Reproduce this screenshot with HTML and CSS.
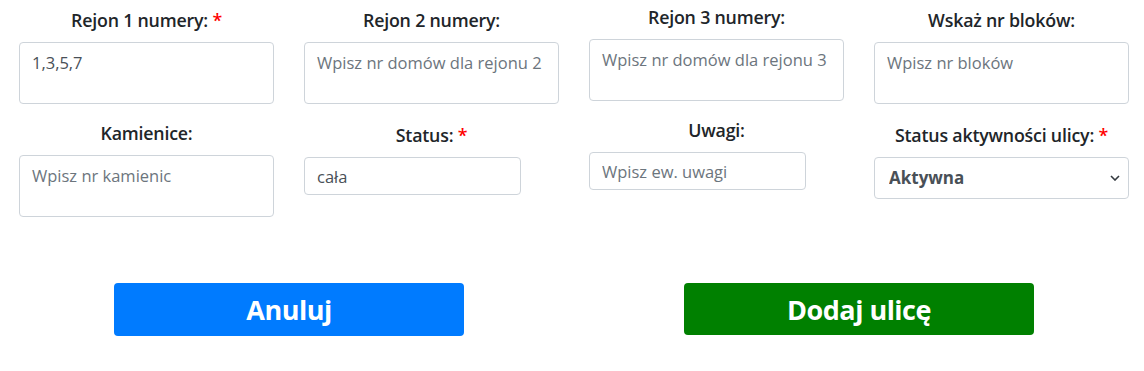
FILE: index.html
```html
<!DOCTYPE html>
<html>
<head>
    <meta charset="utf-8">
    <title>Dodaj ulicę</title>
    <link rel="stylesheet" href="styles.css">
</head>
<body>
    <form class="street-form">
        <div class="row row-top">
            <div class="field">
                <label for="r1">Rejon 1 numery: <span class="req">*</span></label>
                <textarea id="r1" class="control area">1,3,5,7</textarea>
            </div>
            <div class="field">
                <label for="r2">Rejon 2 numery:</label>
                <textarea id="r2" class="control area" placeholder="Wpisz nr domów dla rejonu 2"></textarea>
            </div>
            <div class="field shift-up">
                <label for="r3">Rejon 3 numery:</label>
                <textarea id="r3" class="control area" placeholder="Wpisz nr domów dla rejonu 3"></textarea>
            </div>
            <div class="field">
                <label for="bloki">Wskaż nr bloków:</label>
                <textarea id="bloki" class="control area" placeholder="Wpisz nr bloków"></textarea>
            </div>
        </div>

        <div class="row row-bottom">
            <div class="field">
                <label for="kam">Kamienice:</label>
                <textarea id="kam" class="control area" placeholder="Wpisz nr kamienic"></textarea>
            </div>
            <div class="field shift-down">
                <label for="status">Status: <span class="req">*</span></label>
                <input type="text" id="status" class="control short" value="cała">
            </div>
            <div class="field shift-up">
                <label for="uwagi">Uwagi:</label>
                <input type="text" id="uwagi" class="control short" placeholder="Wpisz ew. uwagi">
            </div>
            <div class="field shift-down">
                <label for="aktywna">Status aktywności ulicy: <span class="req">*</span></label>
                <select id="aktywna" class="control select">
                    <option>Aktywna</option>
                    <option>Nieaktywna</option>
                </select>
            </div>
        </div>

        <div class="buttons">
            <div class="btn-cell">
                <button type="button" class="btn btn-cancel">Anuluj</button>
            </div>
            <div class="btn-cell">
                <button type="submit" class="btn btn-add">Dodaj ulicę</button>
            </div>
        </div>
    </form>
</body>
</html>
```

FILE: styles.css
```css
body {
    font-family: "Open Sans", "Noto Sans", sans-serif;
    background-color: #fff;
    color: #212529;
    margin: 0;
    padding: 0;
}

.street-form {
    padding-left: 4px;
}

.row {
    display: grid;
    grid-template-columns: repeat(4, 285px);
    align-items: start;
}

.row-top {
    padding-top: 8px;
}

.row-bottom {
    padding-top: 17px;
}

.field {
    padding: 0 15px;
    text-align: center;
}

.shift-up {
    margin-top: -3px;
}

.shift-down {
    margin-top: 2px;
}

.field label {
    display: block;
    font-size: 17.8px;
    font-weight: 600;
    line-height: 24px;
    margin-bottom: 10px;
    letter-spacing: -0.2px;
}

.req {
    color: red;
}

.control {
    display: block;
    width: 100%;
    box-sizing: border-box;
    border: 1px solid #ced4da;
    border-radius: 4px;
    background-color: #fff;
    font-family: inherit;
    font-size: 16.5px;
    color: #495057;
    text-align: left;
    padding: 9px 12px 7px;
    line-height: 22px;
}

.control::placeholder {
    color: #6c757d;
}

.area {
    height: 62px;
    resize: none;
    overflow: hidden;
}

.short {
    width: 217px;
    height: 38px;
    padding: 6px 12px;
}

.select {
    height: 42px;
    padding: 6px 14px;
    font-size: 17px;
    font-weight: 700;
    appearance: none;
    background-image: url("data:image/svg+xml,%3Csvg xmlns='http://www.w3.org/2000/svg' width='10' height='6' viewBox='0 0 10 6'%3E%3Cpath d='M1 1l4 4 4-4' fill='none' stroke='%23343a40' stroke-width='1.6'/%3E%3C/svg%3E");
    background-repeat: no-repeat;
    background-position: right 8px center;
}

.buttons {
    display: grid;
    grid-template-columns: 570px 570px;
    padding-top: 66px;
}

.btn-cell {
    display: flex;
    justify-content: center;
}

.btn {
    width: 350px;
    height: 53px;
    border: none;
    border-radius: 4px;
    color: white;
    font-family: inherit;
    font-size: 27px;
    font-weight: 700;
    letter-spacing: -0.5px;
    cursor: pointer;
}

.btn-cancel {
    background-color: #007bff;
}

.btn-add {
    background-color: #008000;
    height: 52px;
}
```
